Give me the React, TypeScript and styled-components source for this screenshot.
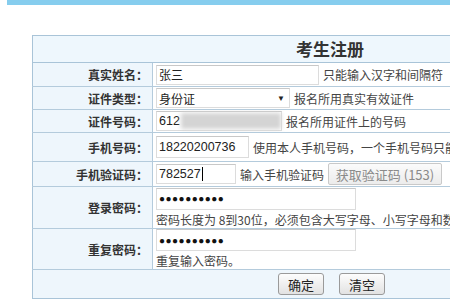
import React from "react";
import styled, { createGlobalStyle } from "styled-components";

const GlobalStyle = createGlobalStyle`
  html, body {
    margin: 0;
    padding: 0;
    background: #fff;
    overflow: hidden;
  }
  body {
    font-family: "Noto Sans CJK SC", "Liberation Sans", sans-serif;
    font-size: 12px;
    color: #333;
  }
`;

const Page = styled.div`
  width: 450px;
  height: 300px;
  overflow: hidden;
`;

const TopBar = styled.div`
  margin-left: 7px;
  height: 5px;
  background: #86cdee;
`;

const Form = styled.table`
  margin: 30px 0 0 32px;
  width: 596px;
  border-collapse: collapse;
  table-layout: fixed;
  border: 1px solid #a9c4d8;
`;

const Row = styled.tr<{ $h: number }>`
  height: ${p => p.$h}px;
`;

const Title = styled.th`
  background: #eef7fd;
  font-size: 17px;
  font-weight: bold;
  color: #333;
  text-align: center;
  border-bottom: 1px solid #a9c4d8;
  padding: 0;
  line-height: 26px;
`;

const Label = styled.td`
  width: 115px;
  background: #eef6fc;
  text-align: right;
  font-weight: bold;
  color: #333;
  padding: 0 4px 0 0;
  border-bottom: 1px solid #b4cbdc;
  border-right: 1px solid #b4cbdc;
  white-space: nowrap;
`;

const Value = styled.td`
  background: #fff;
  padding: 0 0 0 3px;
  border-bottom: 1px solid #b4cbdc;
  white-space: nowrap;
  overflow: hidden;
`;

const Line = styled.div`
  display: flex;
  align-items: center;
  gap: 4px;
`;

const Stack = styled.div`
  display: flex;
  flex-direction: column;
  gap: 1px;
`;

const Field = styled.div<{ $w: number; $tall?: boolean }>`
  box-sizing: border-box;
  width: ${p => p.$w}px;
  height: ${p => (p.$tall ? 22 : 20)}px;
  border: 1px solid #dcdcdc;
  border-top-color: #c8c8c8;
  background: #fff;
  display: flex;
  align-items: center;
  padding: 0 2px;
  font-family: "Liberation Sans", "Noto Sans CJK SC", sans-serif;
  font-size: 12.5px;
  color: #222;
  position: relative;
`;

const CnText = styled.span`
  font-family: "Noto Sans CJK SC", sans-serif;
  font-size: 12px;
`;

const Caret = styled.span`
  display: inline-block;
  width: 1px;
  height: 14px;
  background: #000;
  margin-left: 1px;
`;

const Blur = styled.span`
  position: absolute;
  left: 24px;
  top: 1px;
  width: 100px;
  height: 16px;
  background: #d4d4d4;
  filter: blur(2px);
`;

const Arrow = styled.span`
  margin-left: auto;
  margin-right: 2px;
  font-size: 8px;
  color: #222;
`;

const Dots = styled.span`
  font-size: 10px;
  letter-spacing: 0.5px;
  color: #111;
`;

const Hint = styled.span`
  color: #444;
  font-size: 12px;
`;

const CodeButton = styled.button`
  flex: none;
  height: 22px;
  width: 114px;
  padding: 0;
  border: 1px solid #c9c9c9;
  border-radius: 2px;
  background: linear-gradient(#fbfbfb, #ececec);
  color: #8a8a8a;
  font-family: "Noto Sans CJK SC", "Liberation Sans", sans-serif;
  font-size: 13px;
`;

const Actions = styled.td`
  background: #eef6fc;
  padding: 0;
`;

const ActionBar = styled.div`
  display: flex;
  gap: 15px;
  padding-left: 245px;
  align-items: center;
`;

const Button = styled.button`
  width: 46px;
  height: 22px;
  padding: 0;
  border: 1px solid #9a9a9a;
  border-radius: 3px;
  background: linear-gradient(#fdfdfd, #e2e2e2);
  color: #222;
  font-family: "Noto Sans CJK SC", sans-serif;
  font-size: 13px;
`;

export default function App() {
  return (
    <Page>
      <GlobalStyle />
      <TopBar />
      <Form>
        <colgroup>
          <col style={{ width: 120 }} />
          <col />
        </colgroup>
        <tbody>
          <Row $h={27}>
            <Title colSpan={2}>考生注册</Title>
          </Row>
          <Row $h={24}>
            <Label>真实姓名：</Label>
            <Value>
              <Line>
                <Field $w={163}><CnText>张三</CnText></Field>
                <Hint>只能输入汉字和间隔符</Hint>
              </Line>
            </Value>
          </Row>
          <Row $h={23}>
            <Label>证件类型：</Label>
            <Value>
              <Line>
                <Field $w={134}>
                  <CnText>身份证</CnText>
                  <Arrow>▼</Arrow>
                </Field>
                <Hint>报名所用真实有效证件</Hint>
              </Line>
            </Value>
          </Row>
          <Row $h={23}>
            <Label>证件号码：</Label>
            <Value>
              <Line>
                <Field $w={126}>
                  612<Blur />
                </Field>
                <Hint>报名所用证件上的号码</Hint>
              </Line>
            </Value>
          </Row>
          <Row $h={29}>
            <Label>手机号码：</Label>
            <Value>
              <Line>
                <Field $w={93} $tall>18220200736</Field>
                <Hint>使用本人手机号码，一个手机号码只能注册一次</Hint>
              </Line>
            </Value>
          </Row>
          <Row $h={25}>
            <Label>手机验证码：</Label>
            <Value>
              <Line>
                <Field $w={80}>782527<Caret /></Field>
                <Hint>输入手机验证码</Hint>
                <CodeButton disabled>获取验证码 (153)</CodeButton>
              </Line>
            </Value>
          </Row>
          <Row $h={42}>
            <Label>登录密码：</Label>
            <Value>
              <Stack>
                <Field $w={200} $tall><Dots>●●●●●●●●●●</Dots></Field>
                <Hint>密码长度为 8到30位，必须包含大写字母、小写字母和数字</Hint>
              </Stack>
            </Value>
          </Row>
          <Row $h={41}>
            <Label>重复密码：</Label>
            <Value>
              <Stack>
                <Field $w={200} $tall><Dots>●●●●●●●●●●</Dots></Field>
                <Hint>重复输入密码。</Hint>
              </Stack>
            </Value>
          </Row>
          <Row $h={29}>
            <Actions colSpan={2}>
              <ActionBar>
                <Button>确定</Button>
                <Button>清空</Button>
              </ActionBar>
            </Actions>
          </Row>
        </tbody>
      </Form>
    </Page>
  );
}
